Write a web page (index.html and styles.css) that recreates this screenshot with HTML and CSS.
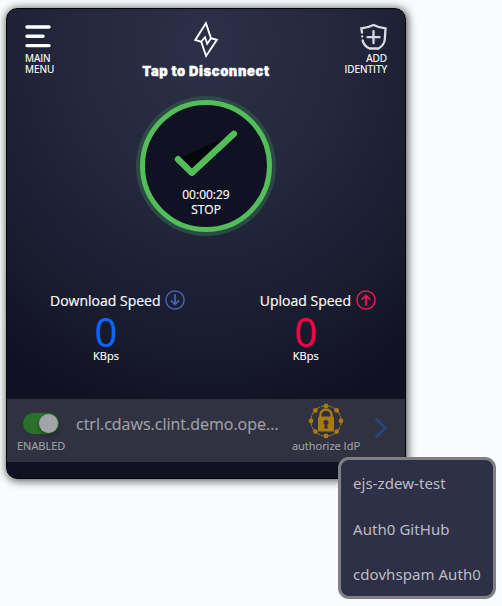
FILE: index.html
```html
<!DOCTYPE html>
<html lang="en">
<head>
<meta charset="utf-8">
<title>Desktop Edge</title>
<link rel="stylesheet" href="styles.css">
</head>
<body>
<main class="window">
  <header class="header">
    <div class="action main-menu">
      <svg width="27" height="26" viewBox="0 0 27 26" stroke="#fff" stroke-width="3.4" stroke-linecap="round"><path d="M2 3H24M2 12.3H18M2 21.6H24"/></svg>
      <span>MAIN<br>MENU</span>
    </div>
    <div class="brand">
      <svg width="26" height="42" viewBox="0 0 26 42" fill="none" stroke="#fff" stroke-width="1.9"><path d="M12.9 4.2L2.3 21L8.2 22.8L13.1 37L23.9 20.8L18 19.2Z"/><path stroke-width="1.7" d="M8.2 22.8L12 18.2L14.2 24.8L18 19.2"/></svg>
      <span class="title">Tap to Disconnect</span>
    </div>
    <div class="action identity">
      <svg width="28" height="28" viewBox="0 0 28 28" fill="none" stroke="#d5dde2" stroke-width="2.3" stroke-linecap="round"><path d="M3 9.5L2.4 5.3Q9 4.8 14.5 2Q20 4.8 26.5 5.3L25.8 16.5Q25.2 22.2 19.5 25.5H10.5Q4.6 22.8 3.6 17.3M3.2 13.4V13.5M14.5 8.2V20.2M8.5 14.2H20.5"/></svg>
      <span>ADD<br>IDENTITY</span>
    </div>
  </header>

  <section class="connection">
    <div class="dial">
      <svg width="68" height="52" viewBox="0 0 68 52"><path d="M7 29L20 43L62 4Z" fill="#05070a"/><path d="M7 29.2L20.8 42.8L62.8 3.8" fill="none" stroke="#53bd5a" stroke-width="6.4" stroke-linecap="round" stroke-linejoin="round"/></svg>
      <span class="timer">00:00:29</span>
      <span class="stop">STOP</span>
    </div>
  </section>

  <section class="speeds">
    <div class="speed download">
      <div class="label"><span>Download Speed</span><svg width="20" height="20" viewBox="0 0 20 20" fill="none" stroke="#3d65ae" stroke-width="1.5" stroke-linecap="round"><circle cx="10" cy="10" r="9.1"/><path stroke-width="1.8" d="M10 5V14.2M6.4 10.8L10 14.4L13.6 10.8"/></svg></div>
      <div class="reading"><strong>0</strong><span>KBps</span></div>
    </div>
    <div class="speed upload">
      <div class="label"><span>Upload Speed</span><svg width="20" height="20" viewBox="0 0 20 20" fill="none" stroke="#e31b52" stroke-width="1.5" stroke-linecap="round"><circle cx="10" cy="10" r="9.1"/><path stroke-width="1.8" d="M10 15V5.7M6.2 9.2L10 5.4L13.8 9.2"/></svg></div>
      <div class="reading"><strong>0</strong><span>KBps</span></div>
    </div>
  </section>

  <section class="identity-row">
    <div class="status"><div class="toggle"><i></i></div><span>ENABLED</span></div>
    <div class="host">ctrl.cdaws.clint.demo.ope...</div>
    <div class="authorize">
      <svg width="36" height="36" viewBox="0 0 36 36" fill="#a77b12"><circle cx="18" cy="18" r="15.2" fill="none" stroke="#8e6c1d" stroke-width="1.2" stroke-dasharray="5 1"/><circle cx="18" cy="3" r="2.4"/><circle cx="28.6" cy="7.4" r="2.4"/><circle cx="33" cy="18" r="2.4"/><circle cx="28.6" cy="28.6" r="2.4"/><circle cx="18" cy="33" r="2.4"/><circle cx="7.4" cy="28.6" r="2.4"/><circle cx="3" cy="18" r="2.4"/><circle cx="7.4" cy="7.4" r="2.4"/><path d="M12.3 14V12.2A5.7 5.7 0 0 1 23.7 12.2V14" fill="none" stroke="#a77b12" stroke-width="2.4"/><rect x="10" y="13.5" width="16" height="15" rx="1.5"/><path d="M16.9 21.5L16 25.5H20L19.1 21.5Z" fill="#303040"/><circle cx="18" cy="19.5" r="2.5" fill="#303040"/></svg>
      <span>authorize IdP</span>
    </div>
    <svg class="chevron" width="14" height="22" viewBox="0 0 14 22" fill="none" stroke="#28457f" stroke-width="2.7"><path d="M1.5 1.5L11.5 11L1.5 20.5"/></svg>
  </section>
</main>
<ul class="provider-menu">
  <li>ejs-zdew-test</li>
  <li>Auth0 GitHub</li>
  <li>cdovhspam Auth0</li>
</ul>
</body>
</html>
```
FILE: styles.css
```css
* { box-sizing: border-box; }
body {
  margin: 0;
  padding: 8px 0 0 6px;
  height: 606px;
  overflow: hidden;
  background: #f9fbfd;
  color: #fff;
  font-family: "Open Sans", sans-serif;
}
svg { display: block; flex: none; }
.window {
  width: 400px;
  height: 471px;
  display: flex;
  flex-direction: column;
  border: 1px solid #050508;
  border-radius: 11px;
  background: radial-gradient(ellipse 330px 380px at 50% 8%, #2c3048 0%, #24283d 40%, #191b2f 78%, #101122 100%);
  box-shadow: 1px 1px 9px 1px rgba(0, 0, 0, .65);
}
.header {
  height: 79px;
  padding: 0 18px;
  display: grid;
  grid-template-columns: 100px 1fr 100px;
}
.action {
  display: flex;
  flex-direction: column;
  font-size: 10px;
  line-height: 11px;
  font-weight: 500;
  -webkit-text-stroke: .15px;
}
.main-menu { padding-top: 15px; }
.main-menu span { margin-top: 3px; }
.identity { padding-top: 14px; align-items: flex-end; text-align: right; }
.identity span { margin-top: 2px; }
.brand {
  display: flex;
  flex-direction: column;
  align-items: center;
  padding-top: 10px;
}
.title {
  margin-top: 1px;
  font: 900 13px/18px Inter, sans-serif;
  letter-spacing: .6px;
  -webkit-text-stroke: .4px #fff;
  white-space: nowrap;
}
.connection { display: flex; justify-content: center; }
.dial {
  width: 132px;
  height: 132px;
  margin-top: 12px;
  display: flex;
  flex-direction: column;
  align-items: center;
  border: 5px solid #53bd5a;
  border-radius: 50%;
  background: #101122;
  box-shadow: 0 0 0 4px #2c4945;
  font-size: 12px;
  font-weight: 500;
  line-height: 15px;
  -webkit-text-stroke: .15px;
}
.dial svg { margin: 25px 3px 0 0; }
.timer { margin-top: 5px; }
.speeds {
  height: 106px;
  margin-top: 61px;
  padding: 0 29px 0 43px;
  display: flex;
  justify-content: space-between;
  -webkit-text-stroke: .15px;
}
.label {
  height: 20px;
  margin-top: -3px;
  display: flex;
  align-items: center;
  gap: 5px;
  font-size: 14px;
  font-weight: 500;
  white-space: nowrap;
}
.reading {
  width: 112px;
  display: flex;
  flex-direction: column;
  align-items: center;
}
.upload .reading { width: 92px; }
.reading strong {
  height: 36px;
  font-size: 40px;
  line-height: 43px;
  font-weight: 400;
}
.reading span { margin-top: 2px; font-size: 11px; line-height: 15px; font-weight: 500; }
.download strong { color: #0968ff; }
.upload strong { color: #ff0048; }
.identity-row {
  height: 63px;
  padding-left: 10px;
  display: flex;
  background: #303141;
  color: #a1a1a9;
  -webkit-text-stroke: .15px;
}
.status {
  width: 59px;
  padding-top: 14px;
  font-size: 11px;
  line-height: 15px;
}
.toggle {
  width: 36px;
  height: 21px;
  margin: 0 0 4px 6px;
  padding: 1px 0 0 16px;
  border-radius: 11px;
  background: #28702b;
}
.toggle i {
  display: block;
  width: 19px;
  height: 19px;
  border-radius: 50%;
  background: #a3a3aa;
  box-shadow: 0 3px 4px rgba(0, 0, 0, .25);
}
.host {
  width: 204px;
  padding-top: 14px;
  font-size: 16px;
  font-weight: 500;
  line-height: 22px;
  white-space: nowrap;
}
.authorize {
  width: 92px;
  padding-top: 4px;
  display: flex;
  flex-direction: column;
  align-items: center;
  font-size: 11px;
  line-height: 15px;
  white-space: nowrap;
}
.authorize span { margin-top: -1px; }
.chevron { margin: 18px 0 0 2px; }
.provider-menu {
  position: absolute;
  left: 338px;
  top: 457px;
  width: 158px;
  height: 142px;
  margin: 0;
  padding: 1px 12px;
  list-style: none;
  border: 3px solid #808083;
  border-radius: 11px;
  background: #2d3046;
  color: #bdbdc2;
  font: 15px/45.5px "Noto Sans", sans-serif;
  letter-spacing: .06px;
  white-space: nowrap;
}
```
